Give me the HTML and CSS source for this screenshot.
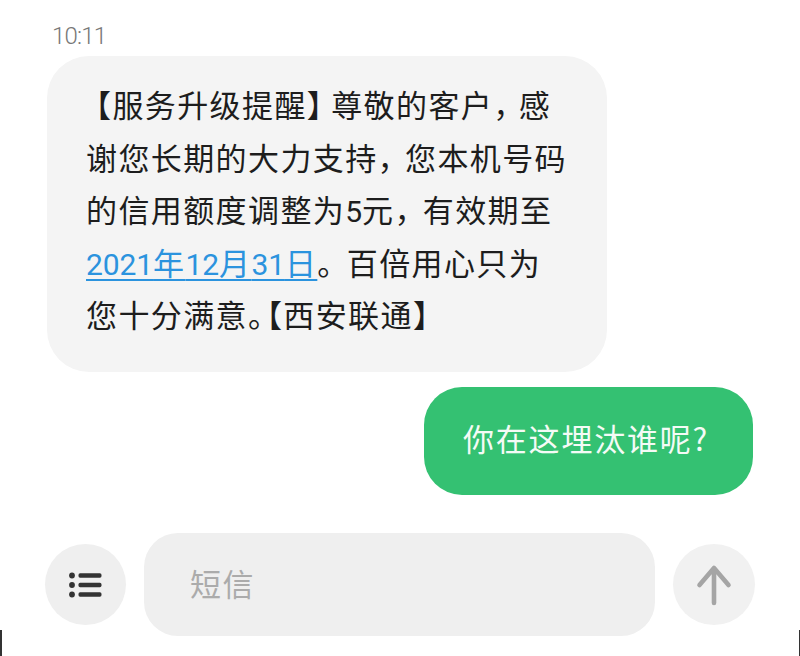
FILE: index.html
```html
<!DOCTYPE html>
<html lang="zh-CN">
<head>
<meta charset="utf-8">
<title>短信</title>
<link rel="stylesheet" href="styles.css">
</head>
<body>
<main class="screen">
  <div class="time">10:11</div>
  <div class="bubble incoming"><p class="line"><span class="lead">【</span>服务升级提醒<span class="trim-8">】</span>尊敬的客户<span class="trim-7">，</span>感</p><p class="line">谢您长期的大力支持<span class="trim-5">，</span>您本机号码</p><p class="line">的信用额度调整为<span class="num">5</span>元<span class="trim-4">，</span>有效期至</p><p class="line"><a class="link" href="#"><span class="num">2021</span>年<span class="num">12</span>月<span class="num">31</span>日</a><span class="trim-3">。</span>百倍用心只为</p><p class="line">您十分满意<span class="trim-14">。</span>【西安联通】</p></div>
  <div class="outgoing-row"><div class="bubble outgoing">你在这埋汰谁呢?</div></div>
  <div class="composer">
    <button class="round menu" aria-label="菜单">
      <svg width="33" height="26" viewBox="0 0 33 26"><g fill="#333"><circle cx="3" cy="3.500" r="2.900"/><circle cx="3" cy="13" r="2.900"/><circle cx="3" cy="22.500" r="2.900"/><rect x="9.500" y="1.300" width="23" height="4.400" rx="1.600"/><rect x="9.500" y="10.800" width="23" height="4.400" rx="1.600"/><rect x="9.500" y="20.300" width="23" height="4.400" rx="1.600"/></g></svg>
    </button>
    <div class="input">短信</div>
    <button class="round send" aria-label="发送">
      <svg width="36" height="42" viewBox="0 0 36 42"><path d="M18 39V4M3.500 21L18 4L32.500 21" fill="none" stroke="#a5a5a5" stroke-width="4.600" stroke-linecap="round" stroke-linejoin="round"/></svg>
    </button>
  </div>
  <span class="corner left"></span>
  <span class="corner right"></span>
</main>
</body>
</html>
```

FILE: styles.css
```css
* { box-sizing: border-box; }
html, body { margin: 0; background: #fff; }
.screen {
  position: relative;
  width: 800px;
  height: 656px;
  overflow: hidden;
  padding: 22px 47px 0;
  font-family: "Noto Sans CJK SC", "Noto Sans", sans-serif;
}
.time {
  margin-left: 5px;
  height: 28px;
  font-family: "Roboto", sans-serif;
  font-size: 24px;
  font-weight: 300;
  line-height: 28px;
  color: #787878;
  letter-spacing: -0.800px;
}
.bubble { font-size: 31px; letter-spacing: 1.400px; }
.incoming {
  margin-top: 6px;
  width: 560px;
  height: 316px;
  padding: 22px 30px 0 39px;
  background: #f4f4f4;
  border-radius: 42px;
  color: #1d1d1d;
}
.line { margin: 0; height: 52.600px; line-height: 52.600px; white-space: nowrap; }
.num { font-family: "Roboto", sans-serif; font-size: 30px; letter-spacing: -0.100px; }
.lead { margin-left: -6px; }
.trim-3 { letter-spacing: -1.600px; }
.trim-4 { letter-spacing: -2.600px; }
.trim-5 { letter-spacing: -3.600px; }
.trim-7 { letter-spacing: -5.600px; }
.trim-8 { letter-spacing: -6.600px; }
.trim-14 { letter-spacing: -12.600px; }
.link {
  color: #2b93de;
  text-decoration: underline;
  text-decoration-thickness: 2px;
  text-decoration-skip-ink: none;
  text-underline-offset: 4px;
}
.outgoing-row { display: flex; justify-content: flex-end; margin-top: 15px; }
.outgoing {
  width: 329px;
  height: 108px;
  display: flex;
  align-items: center;
  padding-left: 39px;
  padding-bottom: 8px;
  letter-spacing: 1.800px;
  background: #34c172;
  border-radius: 38px;
  color: #f4fbf6;
  white-space: nowrap;
}
.composer {
  display: flex;
  align-items: center;
  margin: 38px 0 0 -2px;
  width: 710px;
  height: 103px;
}
.round {
  flex: none;
  width: 81px;
  height: 81px;
  padding: 0;
  border: 0;
  border-radius: 50%;
  display: flex;
  align-items: center;
  justify-content: center;
}
.menu { background: #efefef; }
.send { background: #f1f1f1; width: 82px; margin-left: 18px; }
.input {
  flex: none;
  width: 511px;
  height: 103px;
  margin-left: 18px;
  padding: 0 0 4px 46px;
  display: flex;
  align-items: center;
  background: #efefef;
  border-radius: 34px;
  font-size: 31px;
  letter-spacing: 1.400px;
  color: #ababab;
}
.corner { position: absolute; bottom: 0; height: 26px; background: #333; }
.corner.left { left: 0; width: 2px; }
.corner.right { right: 0; width: 1px; }
```
